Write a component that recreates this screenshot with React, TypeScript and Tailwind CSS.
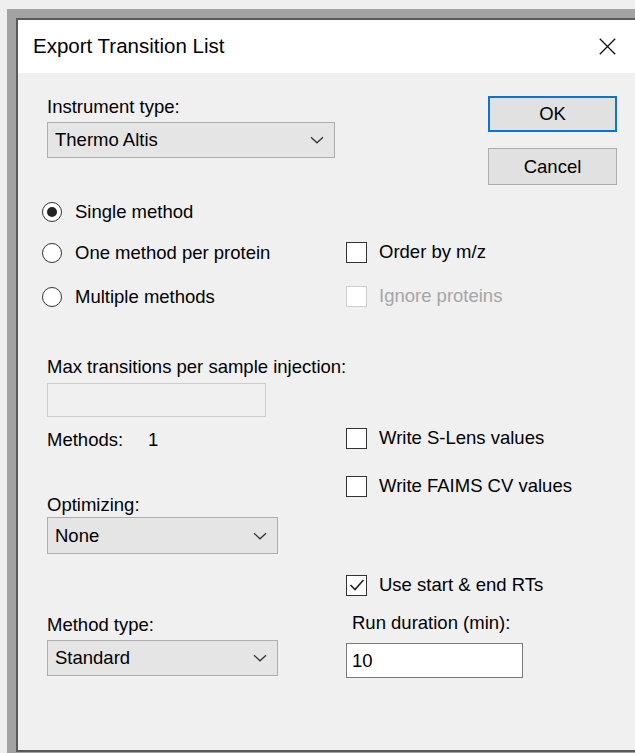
import type { ReactNode } from 'react';

const FONT = { fontFamily: '"Liberation Sans", Arial, sans-serif' };

function Chevron() {
  return (
    <svg width="14" height="8" viewBox="0 0 14 8" fill="none">
      <path d="M1 1.2 L7 6.8 L13 1.2" stroke="#333" strokeWidth="1.3" />
    </svg>
  );
}

function Combo({ value, width, height = 36 }: { value: string; width: string; height?: number }) {
  return (
    <div
      className={`${width} flex items-center justify-between border border-[#adadad] bg-[#e5e5e5] pl-[7px] pr-[10px] text-black`}
      style={{ height }}
    >
      <span>{value}</span>
      <Chevron />
    </div>
  );
}

function Radio({ checked, label }: { checked?: boolean; label: string }) {
  return (
    <div className="-ml-[5px] flex h-6 items-center gap-[13px]">
      <span className="flex h-5 w-5 items-center justify-center rounded-full border-[1.5px] border-[#333] bg-white">
        {checked && <span className="h-[10px] w-[10px] rounded-full bg-[#222]" />}
      </span>
      <span>{label}</span>
    </div>
  );
}

function Check({ checked, disabled, label }: { checked?: boolean; disabled?: boolean; label: string }) {
  return (
    <div className="flex h-6 items-center gap-3">
      <span
        className={`flex h-[21px] w-[21px] items-center justify-center border-[1.5px] bg-white ${
          disabled ? 'border-[#cfcfcf] bg-[#f0f0f0]' : 'border-[#333]'
        }`}
      >
        {checked && (
          <svg width="16" height="14" viewBox="0 0 16 14" fill="none">
            <path d="M1.5 7 L6 11.5 L14.5 2" stroke="#222" strokeWidth="1.6" />
          </svg>
        )}
      </span>
      <span className={disabled ? 'text-[#a6a6a6]' : ''}>{label}</span>
    </div>
  );
}

function Label({ children, className = '' }: { children: ReactNode; className?: string }) {
  return <div className={`h-5 leading-5 ${className}`}>{children}</div>;
}

export default function App() {
  return (
    <div className="flex h-[753px] w-[635px] flex-col overflow-hidden bg-[#efefef] pl-[7px] pt-[9px]" style={FONT}>
      <div className="flex flex-1 flex-col bg-[#a3a3a3] pl-[9px] pt-[9px] pb-px">
        <div className="flex flex-1 flex-col border-b-2 border-l-2 border-t-2 border-[#5a5a5a] text-[18.5px] text-black">
          {/* title bar */}
          <div className="flex h-[53px] items-center justify-between bg-white pl-[15px] pr-[19px]">
            <span className="text-[20.5px]">Export Transition List</span>
            <svg width="17" height="17" viewBox="0 0 17 17" fill="none">
              <path d="M0.8 0.8 L16.2 16.2 M16.2 0.8 L0.8 16.2" stroke="#111" strokeWidth="1.3" />
            </svg>
          </div>

          {/* dialog body */}
          <div className="flex flex-1 gap-[11px] bg-[#f0f0f0] pl-[29px] pr-[16px]">
            <div className="flex w-[288px] flex-col pt-6">
              <Label>Instrument type:</Label>
              <div className="mt-[5px]">
                <Combo value="Thermo Altis" width="w-[288px]" />
              </div>

              <div className="mt-[42px]">
                <Radio checked label="Single method" />
              </div>
              <div className="mt-[17px]">
                <Radio label="One method per protein" />
              </div>
              <div className="mt-5">
                <Radio label="Multiple methods" />
              </div>

              <Label className="mt-12 whitespace-nowrap">Max transitions per sample injection:</Label>
              <div className="mt-[6px] h-[34px] w-[219px] border border-[#cccccc] bg-[#f0f0f0]" />

              <div className="mt-[13px] flex h-5 items-center leading-5">
                <span className="w-[101px]">Methods:</span>
                <span>1</span>
              </div>

              <Label className="mt-[45px]">Optimizing:</Label>
              <div className="mt-[2px]">
                <Combo value="None" width="w-[231px]" height={37} />
              </div>

              <Label className="mt-[61px]">Method type:</Label>
              <div className="mt-[5px]">
                <Combo value="Standard" width="w-[231px]" />
              </div>
            </div>

            <div className="flex w-[271px] flex-col pt-[23px]">
              <div className="flex flex-col items-end">
                <button className="flex h-9 w-[129px] items-center justify-center border-2 border-[#0a74d4] bg-[#e1e1e1]">
                  OK
                </button>
                <button className="mt-4 flex h-[37px] w-[129px] items-center justify-center border border-[#adadad] bg-[#e1e1e1]">
                  Cancel
                </button>
              </div>

              <div className="mt-[55px]">
                <Check label="Order by m/z" />
              </div>
              <div className="mt-5">
                <Check disabled label="Ignore proteins" />
              </div>

              <div className="mt-[118px]">
                <Check label="Write S-Lens values" />
              </div>
              <div className="mt-6">
                <Check label="Write FAIMS CV values" />
              </div>

              <div className="mt-[75px]">
                <Check checked label="Use start & end RTs" />
              </div>

              <Label className="mt-4 pl-[6px]">Run duration (min):</Label>
              <div className="mt-[10px] flex h-[35px] w-[177px] items-center border border-[#7a7a7a] bg-white pl-[5px]">
                10
              </div>
            </div>
          </div>
        </div>
      </div>
    </div>
  );
}
